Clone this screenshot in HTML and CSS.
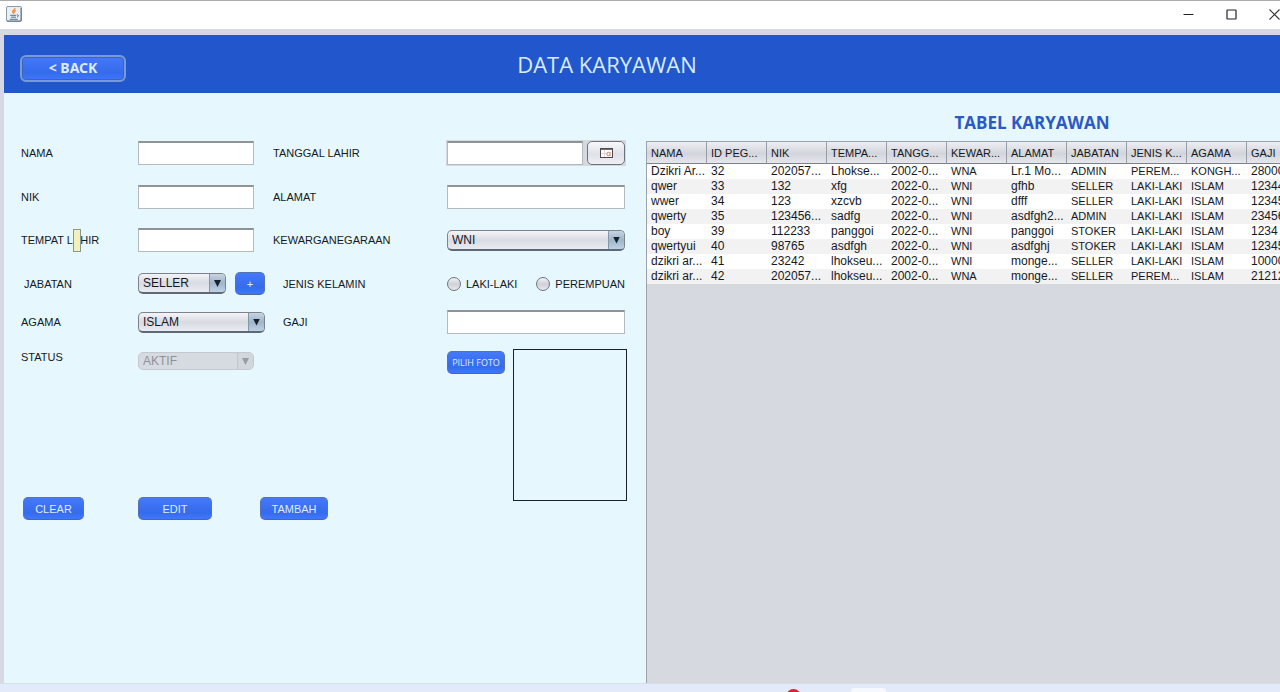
FILE: index.html
```html
<!DOCTYPE html>
<html lang="id">
<head>
<meta charset="utf-8">
<title>Data Karyawan</title>
<link rel="stylesheet" href="styles.css">
</head>
<body>
<div class="window">
  <div class="titlebar">
    <svg class="java" width="16" height="16" viewBox="0 0 16 16" aria-hidden="true">
      <rect x="0.5" y="0.5" width="15" height="15" rx="1.5" fill="#e9eff4" stroke="#8d9ca8"/>
      <path d="M1 15h14V2" fill="none" stroke="#5d7486"/>
      <path d="M9 2c.4 1.800-2.800 2.400-2.300 4 .2.700.9 1 1.100 1.700M9.800 4.300c-1.600.8-1.800 1.500-1.100 2.300" fill="none" stroke="#ee8a2c" stroke-width="1.300"/>
      <path d="M4.200 9.300h6M5 11.200h5M10.800 8.900c2.300-.3 2.100 1.700.2 2.100M3.800 13.300h8" fill="none" stroke="#54748a" stroke-width="1"/>
    </svg>
    <div class="controls">
      <button type="button" aria-label="Minimize"><svg width="11" height="11" viewBox="0 0 11 11"><path d="M0.500 5.500h10" stroke="#222"/></svg></button>
      <button type="button" aria-label="Maximize"><svg width="11" height="11" viewBox="0 0 11 11"><rect x="1" y="1" width="9" height="9" rx="0.500" fill="none" stroke="#222" stroke-width="1.200"/></svg></button>
      <button type="button" aria-label="Close"><svg width="11" height="11" viewBox="0 0 11 11"><path d="M0.500 0.500l10 10M10.500 0.500l-10 10" stroke="#333" stroke-width="1.100"/></svg></button>
    </div>
  </div>
  <div class="frame">
    <header class="header">
      <button type="button" class="btn back">&lt; BACK</button>
      <h1>DATA KARYAWAN</h1>
    </header>
    <main class="content">
      <form class="form">
        <label for="nama">NAMA</label>
        <input class="text short" id="nama" type="text">
        <label for="tgl">TANGGAL LAHIR</label>
        <div class="date">
          <input class="text" id="tgl" type="text">
          <button type="button" class="calendar" aria-label="Pilih tanggal">
            <svg width="13" height="10" viewBox="0 0 13 10"><rect x="0.500" y="0.500" width="12" height="9" fill="#fff" stroke="#514a4c"/><path d="M1 1.500h11" stroke="#77706f"/><path d="M4.500 2v7M1 5.500h5" stroke="#e4d9d0"/><circle cx="8.500" cy="6" r="1.700" fill="none" stroke="#e77471"/><path d="M10.500 4v4" stroke="#efb6ad"/></svg>
          </button>
        </div>

        <label for="nik">NIK</label>
        <input class="text short" id="nik" type="text">
        <label for="alamat">ALAMAT</label>
        <input class="text" id="alamat" type="text">

        <div class="anchor"><label for="tempat">TEMPAT LAHIR</label><span class="tooltip" role="tooltip"></span></div>
        <input class="text short" id="tempat" type="text">
        <label for="warga">KEWARGANEGARAAN</label>
        <div class="combo"><select id="warga"><option>WNI</option><option>WNA</option></select><span class="arrow"></span></div>

        <label class="indent" for="jabatan">JABATAN</label>
        <div class="pair">
          <div class="combo jabatan"><select id="jabatan"><option>SELLER</option><option>ADMIN</option><option>STOKER</option></select><span class="arrow"></span></div>
          <button type="button" class="btn plus">+</button>
        </div>
        <span class="shift" id="jk">JENIS KELAMIN</span>
        <div class="radios" role="radiogroup" aria-labelledby="jk">
          <label><input type="radio" name="jk">LAKI-LAKI</label>
          <label><input type="radio" name="jk">PEREMPUAN</label>
        </div>

        <label for="agama">AGAMA</label>
        <div class="combo agama"><select id="agama"><option>ISLAM</option><option>KONGHUCU</option></select><span class="arrow"></span></div>
        <label class="shift" for="gaji">GAJI</label>
        <input class="text" id="gaji" type="text">

        <label class="status-label" for="status">STATUS</label>
        <div class="combo status"><select id="status" disabled><option>AKTIF</option></select><span class="arrow"></span></div>
        <div class="photo-area">
          <button type="button" class="btn pick">PILIH FOTO</button>
          <div class="photo"></div>
        </div>
        <button type="button" class="btn clear">CLEAR</button>
        <div class="actions">
          <button type="button" class="btn edit">EDIT</button>
          <button type="button" class="btn add">TAMBAH</button>
        </div>
      </form>

      <section class="list">
        <h2>TABEL KARYAWAN</h2>
        <div class="scroll">
          <table>
            <thead><tr><th>NAMA</th><th>ID PEG...</th><th>NIK</th><th>TEMPA...</th><th>TANGG...</th><th>KEWAR...</th><th>ALAMAT</th><th>JABATAN</th><th>JENIS K...</th><th>AGAMA</th><th>GAJI</th></tr></thead>
            <tbody>
              <tr><td>Dzikri Ar...</td><td>32</td><td>202057...</td><td>Lhokse...</td><td>2002-0...</td><td class="caps">WNA</td><td>Lr.1 Mo...</td><td class="caps">ADMIN</td><td class="caps">PEREM...</td><td class="caps">KONGH...</td><td>28000</td></tr>
              <tr><td>qwer</td><td>33</td><td>132</td><td>xfg</td><td>2022-0...</td><td class="caps">WNI</td><td>gfhb</td><td class="caps">SELLER</td><td class="caps">LAKI-LAKI</td><td class="caps">ISLAM</td><td>12344</td></tr>
              <tr><td>wwer</td><td>34</td><td>123</td><td>xzcvb</td><td>2022-0...</td><td class="caps">WNI</td><td>dfff</td><td class="caps">SELLER</td><td class="caps">LAKI-LAKI</td><td class="caps">ISLAM</td><td>12345</td></tr>
              <tr><td>qwerty</td><td>35</td><td>123456...</td><td>sadfg</td><td>2022-0...</td><td class="caps">WNI</td><td>asdfgh2...</td><td class="caps">ADMIN</td><td class="caps">LAKI-LAKI</td><td class="caps">ISLAM</td><td>23456</td></tr>
              <tr><td>boy</td><td>39</td><td>112233</td><td>panggoi</td><td>2022-0...</td><td class="caps">WNI</td><td>panggoi</td><td class="caps">STOKER</td><td class="caps">LAKI-LAKI</td><td class="caps">ISLAM</td><td>1234</td></tr>
              <tr><td>qwertyui</td><td>40</td><td>98765</td><td>asdfgh</td><td>2022-0...</td><td class="caps">WNI</td><td>asdfghj</td><td class="caps">STOKER</td><td class="caps">LAKI-LAKI</td><td class="caps">ISLAM</td><td>12345</td></tr>
              <tr><td>dzikri ar...</td><td>41</td><td>23242</td><td>lhokseu...</td><td>2002-0...</td><td class="caps">WNI</td><td>monge...</td><td class="caps">SELLER</td><td class="caps">LAKI-LAKI</td><td class="caps">ISLAM</td><td>10000</td></tr>
              <tr><td>dzikri ar...</td><td>42</td><td>202057...</td><td>lhokseu...</td><td>2002-0...</td><td class="caps">WNA</td><td>monge...</td><td class="caps">SELLER</td><td class="caps">PEREM...</td><td class="caps">ISLAM</td><td>21212</td></tr>
            </tbody>
          </table>
        </div>
      </section>
    </main>
  </div>
  <footer class="taskbar"><span class="badge"></span><span class="tab"></span></footer>
</div>
</body>
</html>
```
FILE: styles.css
```css
* { box-sizing: border-box; }
body { margin: 0; overflow: hidden; background: #fff; font: 12px "Liberation Sans", Arial, sans-serif; color: #15191e; }
button, input, select { font: inherit; color: inherit; margin: 0; padding: 0; }
.window { display: flex; flex-direction: column; min-height: 100vh; }

.titlebar { display: flex; justify-content: space-between; align-items: center; height: 29px; padding: 0 0 2px 6px; border-top: 1px solid #ababab; background: #fff; }
.controls { display: flex; gap: 32px; }
.controls button { display: flex; border: 0; background: none; }

.frame { flex: 1; display: flex; flex-direction: column; padding: 6px 0 0 4px; background: #d6d9e3; }
.header { display: grid; grid-template-columns: 106px 1fr 192px; align-items: center; height: 58px; padding-left: 16px; background: #2156cd; }
.header h1 { margin: 0; text-align: center; font: 22px/30px "Open Sans", "Noto Sans", sans-serif; color: #d9ecfc; }

.btn { height: 23px; border: 1px solid #5573b4; border-bottom-color: #55678d; border-radius: 5px; background: linear-gradient(#4479fb, #396eef 50%, #356bee 70%, #3e77ff); color: #dcedff; font-size: 11px; }
.back { height: 27px; margin-top: 8px; border: 2px solid #779bd8; border-radius: 6px; box-shadow: inset 0 0 0 1px #3f64b5; font: bold 14px/18px "Noto Sans", sans-serif; }

.content { flex: 1; display: flex; background: #e6f8fd; }
.form { display: grid; grid-template-columns: 117px 135px 174px 180px; grid-template-rows: 44px 43px 44px 43px 34px 158px 23px; align-content: start; align-items: center; flex: 0 0 642px; padding: 38px 0 0 17px; font-size: 11px; }
.indent { padding-left: 3px; }
.shift { padding-left: 10px; }
.text { width: 178px; height: 24px; border: 1px solid #b4babd; border-top: 2px solid #8e9497; background: #fff; }
.short { width: 116px; }
.date { display: flex; justify-content: space-between; width: 180px; margin-left: -1px; padding: 1px; background: #d5d9df; }
.date .text { width: 136px; }
.calendar { display: flex; align-items: center; justify-content: center; width: 38px; height: 24px; border: 1px solid #6d727c; border-radius: 5px; background: linear-gradient(#f8f8fb, #dfe1e8 55%, #eff0f5); }

.combo { position: relative; width: 178px; height: 21px; border: 1px solid #7d838d; border-bottom: 2px solid #5f6876; border-radius: 5px; background: linear-gradient(#f4f4f8, #d9dbe2 50%, #e9ebf1); overflow: hidden; }
.combo select { display: block; width: 100%; height: 100%; padding: 0 20px 0 4px; border: 0; background: none; appearance: none; font-size: 12px; }
.arrow { position: absolute; inset: 0 0 0 auto; width: 16px; border-left: 1px solid #8497a9; background: linear-gradient(#c5d4e2, #9fb5c9 50%, #bdd1e4); pointer-events: none; }
.arrow::after { content: ""; display: block; width: 7px; height: 7px; margin: 6px auto 0 4px; background: #17202b; clip-path: polygon(0 0, 100% 0, 50% 100%); }
.jabatan { width: 88px; }
.agama { width: 127px; }
.status { align-self: start; width: 116px; height: 18px; margin-top: 13px; border: 1px solid #c3c9ce; background: #d6dbe1; }
.status select { color: #8d9298; opacity: 1; }
.status .arrow { border-color: #c1c7cd; background: #d2d7dd; }
.status .arrow::after { margin-top: 5px; background: #989da3; }
.pair { display: flex; align-items: center; gap: 9px; }
.plus { width: 30px; }
.radios { display: flex; gap: 19px; white-space: nowrap; }
.radios label { display: flex; align-items: center; gap: 5px; }
.radios input { width: 14px; height: 14px; appearance: none; border: 1px solid #6f757e; border-radius: 50%; background: linear-gradient(#f3f3f7, #cfd1d8 50%, #e8e9ee); }
.anchor { position: relative; }
.tooltip { position: absolute; left: 52px; top: -5px; width: 8px; height: 23px; border: 1px solid #8d9590; background: #f2f1bc; }
.status-label { align-self: start; padding-top: 12px; }

.photo-area { grid-column: 4; grid-row: 6 / 8; align-self: start; display: flex; gap: 8px; padding-top: 10px; }
.pick { width: 58px; margin-top: 2px; font: 9px "Open Sans", sans-serif; }
.photo { width: 114px; height: 152px; border: 1px solid #1b2227; }
.clear { grid-column: 1; grid-row: 7; width: 61px; margin-left: 2px; }
.actions { grid-column: 2 / 4; grid-row: 7; display: flex; gap: 48px; }
.edit { width: 74px; }
.add { width: 68px; }

.list { flex: 1; min-width: 0; display: flex; flex-direction: column; padding-top: 18px; }
.list h2 { margin: 0 0 6px; padding-left: 138px; text-align: center; font: bold 17px/24px "Open Sans", "Noto Sans", sans-serif; color: #2b59c5; }
.scroll { flex: 1; overflow: hidden; border-top: 1px solid #9ca3ad; border-left: 1px solid #9ba1aa; background: #d6d9e0; }
table { width: 660px; table-layout: fixed; border-collapse: separate; border-spacing: 0; }
th, td { padding: 0 0 0 4px; text-align: left; white-space: nowrap; overflow: hidden; }
th { height: 22px; border-right: 1px solid #989ea8; border-bottom: 1px solid #7c828d; background: linear-gradient(#eeeff3, #d3d5dc 55%, #e5e7ec); font-size: 11px; font-weight: normal; }
td { height: 15px; line-height: 15px; background: #fff; }
tr:nth-child(even) td { background: #f2f2f3; }
.caps { font-size: 11px; }

.taskbar { display: flex; align-items: flex-start; gap: 50px; height: 9px; padding: 4px 0 0 786px; overflow: hidden; border-top: 1px solid #d5dfeb; background: #e3eaf9; }
.badge { flex: none; width: 15px; height: 15px; margin-top: 1px; border: 3px solid #e0202e; border-radius: 50%; background: #f1b7c2; }
.tab { width: 35px; height: 20px; border-radius: 3px; background: #f5f8ff; }
```
